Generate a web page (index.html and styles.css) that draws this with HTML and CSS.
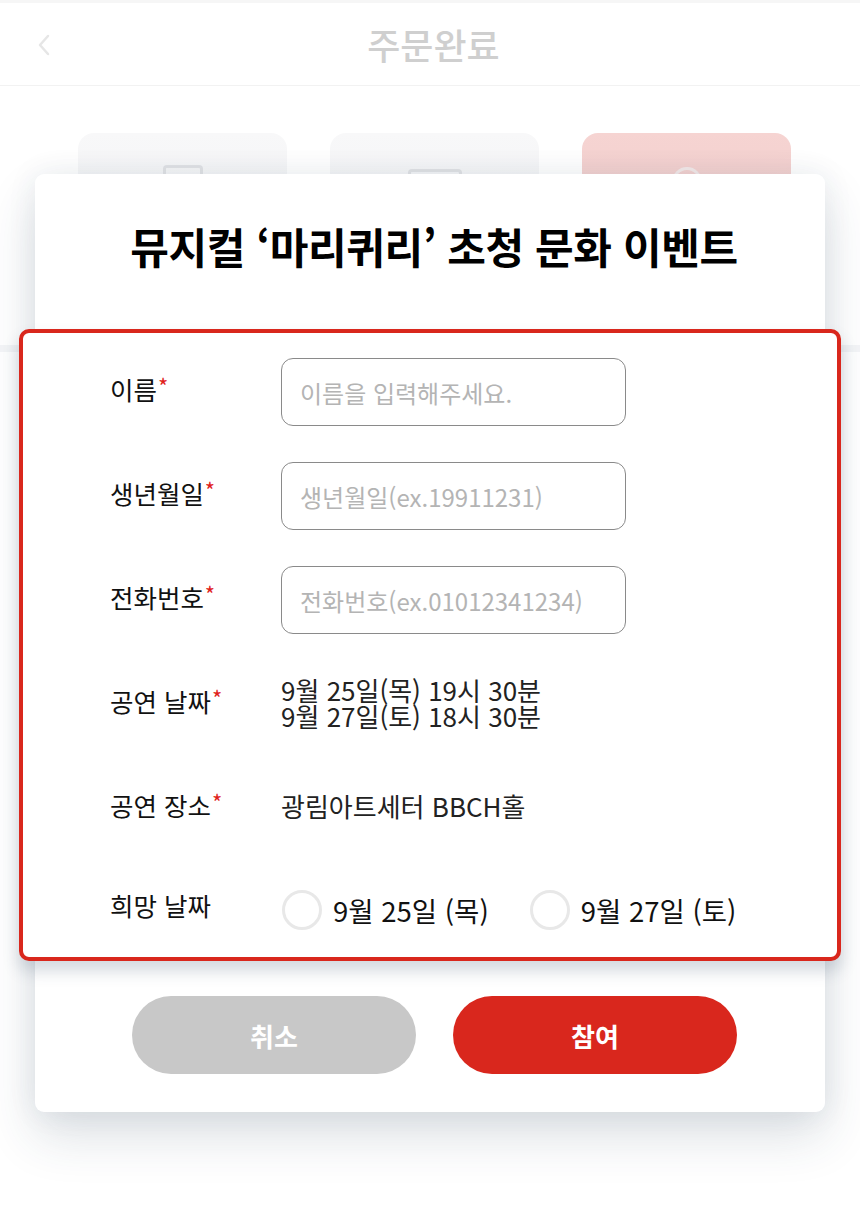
FILE: index.html
```html
<!DOCTYPE html>
<html lang="ko">
<head>
<meta charset="utf-8">
<title>주문완료</title>
<link rel="stylesheet" href="styles.css">
</head>
<body>
<div class="page">
  <header class="topbar">
    <span class="back">
      <svg width="14" height="22" viewBox="0 0 14 22"><path d="M11 2 L3 11 L11 20" fill="none" stroke="#e6e6e6" stroke-width="2.5" stroke-linecap="round" stroke-linejoin="round"/></svg>
    </span>
    <h1 class="topbar-title">주문완료</h1>
  </header>
  <div class="tabs">
    <div class="tab"><span class="tab-icon icon-doc"></span></div>
    <div class="tab"><span class="tab-icon icon-card"></span></div>
    <div class="tab tab-active"><span class="tab-icon icon-circle"></span></div>
  </div>
  <div class="band"></div>

  <div class="modal">
    <h2 class="modal-title">뮤지컬 ‘마리퀴리’ 초청 문화 이벤트</h2>
    <div class="form-box">
      <div class="row">
        <div class="label">이름<span class="req">*</span></div>
        <div class="field"><div class="input">이름을 입력해주세요.</div></div>
      </div>
      <div class="row">
        <div class="label">생년월일<span class="req">*</span></div>
        <div class="field"><div class="input">생년월일(ex.19911231)</div></div>
      </div>
      <div class="row">
        <div class="label">전화번호<span class="req">*</span></div>
        <div class="field"><div class="input">전화번호(ex.01012341234)</div></div>
      </div>
      <div class="row">
        <div class="label">공연 날짜<span class="req">*</span></div>
        <div class="field value-multi">
          <div class="line">9월 25일(목) 19시 30분</div>
          <div class="line">9월 27일(토) 18시 30분</div>
        </div>
      </div>
      <div class="row">
        <div class="label">공연 장소<span class="req">*</span></div>
        <div class="field value">광림아트세터 BBCH홀</div>
      </div>
      <div class="row">
        <div class="label">희망 날짜</div>
        <div class="field radios">
          <label class="radio"><span class="radio-circle"></span><span class="radio-text">9월 25일 (목)</span></label>
          <label class="radio"><span class="radio-circle"></span><span class="radio-text">9월 27일 (토)</span></label>
        </div>
      </div>
    </div>
    <div class="actions">
      <button class="btn btn-cancel">취소</button>
      <button class="btn btn-join">참여</button>
    </div>
  </div>
</div>
</body>
</html>
```

FILE: styles.css
```css
* { box-sizing: border-box; }
html, body {
  margin: 0;
  padding: 0;
  background: #ffffff;
}
body {
  width: 860px;
  height: 1207px;
  overflow: hidden;
  font-family: "Noto Sans CJK KR", "Noto Sans", sans-serif;
  color: #111;
}
.page {
  position: relative;
  width: 860px;
  height: 1207px;
}
.topbar {
  height: 86px;
  border-top: 3px solid #f6f6f6;
  border-bottom: 1px solid #f2f2f2;
  display: flex;
  align-items: center;
}
.back {
  display: flex;
  margin-left: 37px;
  margin-top: 2px;
}
.topbar-title {
  flex: 1;
  margin: 0;
  padding-right: 44px;
  text-align: center;
  font-size: 36px;
  font-weight: 500;
  color: #cfcfcf;
}
.tabs {
  display: flex;
  gap: 43px;
  padding: 47px 0 0 78px;
}
.tab {
  width: 209px;
  height: 210px;
  border-radius: 16px;
  background: linear-gradient(#f8f8f9, #eceef1);
  display: flex;
  justify-content: center;
  padding-top: 32px;
}
.tab-active {
  background: linear-gradient(#f6d4d2, #e9c6c6);
}
.tab-icon { display: block; }
.icon-doc {
  width: 40px;
  height: 30px;
  border: 3px solid #e2e3e6;
  border-bottom: none;
  border-radius: 4px 4px 0 0;
}
.icon-card {
  width: 54px;
  height: 30px;
  margin-top: 4px;
  border: 3px solid #e2e3e6;
  border-bottom: none;
  border-radius: 4px 4px 0 0;
}
.icon-circle {
  width: 30px;
  height: 30px;
  margin-top: 2px;
  border: 3px solid #f4eaea;
  border-radius: 50%;
}
.band {
  height: 7px;
  margin-top: 2px;
  background: #f4f5f7;
}

.modal {
  position: absolute;
  left: 35px;
  top: 174px;
  width: 790px;
  height: 938px;
  background: #fff;
  border-radius: 9px;
  box-shadow: 0 24px 50px rgba(40, 60, 90, 0.16), 0 0 30px rgba(40, 60, 90, 0.08);
  display: flex;
  flex-direction: column;
}
.modal-title {
  margin: 44px 0 0 8px;
  height: 56px;
  line-height: 56px;
  text-align: center;
  font-size: 42px;
  font-weight: 700;
  color: #000;
  letter-spacing: -0.4px;
}
.form-box {
  margin: 55px -16px 0;
  border: 4px solid #d9271d;
  border-radius: 10px;
  background: #fff;
  padding: 25px 0 11px 87px;
  display: flex;
  flex-direction: column;
  gap: 36px;
  box-shadow: 0 10px 16px rgba(60, 80, 110, 0.22);
}
.row {
  display: flex;
  align-items: flex-start;
  height: 68px;
}
.label {
  width: 171px;
  flex: none;
  line-height: 54px;
  font-size: 25.5px;
  color: #111;
  white-space: nowrap;
}
.req {
  color: #e0221a;
  font-size: 22px;
  vertical-align: 5px;
  margin-left: 1px;
}
.field { flex: 1; }
.input {
  width: 345px;
  height: 68px;
  border: 1.5px solid #8a8a8a;
  border-radius: 12px;
  padding-left: 18px;
  display: flex;
  align-items: center;
  font-size: 24px;
  color: #b4b4b4;
  white-space: nowrap;
}
.value-multi {
  padding-top: 7px;
  font-size: 26px;
  color: #222;
}
.line {
  height: 26px;
  line-height: 26px;
  white-space: nowrap;
}
.value {
  line-height: 64px;
  font-size: 26px;
  color: #222;
}
.radios {
  display: flex;
  align-items: center;
  height: 64px;
  gap: 41px;
  padding-left: 1px;
}
.radio {
  display: flex;
  align-items: center;
  gap: 11px;
}
.radio-circle {
  width: 40px;
  height: 40px;
  border: 3px solid #e8e8e8;
  border-radius: 50%;
}
.radio-text {
  font-size: 27.5px;
  color: #111;
  white-space: nowrap;
}
.actions {
  display: flex;
  justify-content: center;
  gap: 37px;
  margin-top: 35px;
  padding-left: 9px;
}
.btn {
  width: 284px;
  height: 78px;
  border: none;
  border-radius: 39px;
  font-family: "Noto Sans CJK KR", sans-serif;
  font-size: 26px;
  font-weight: 700;
  color: #fff;
}
.btn-cancel { background: #c8c8c8; }
.btn-join { background: #d9271d; }
```
